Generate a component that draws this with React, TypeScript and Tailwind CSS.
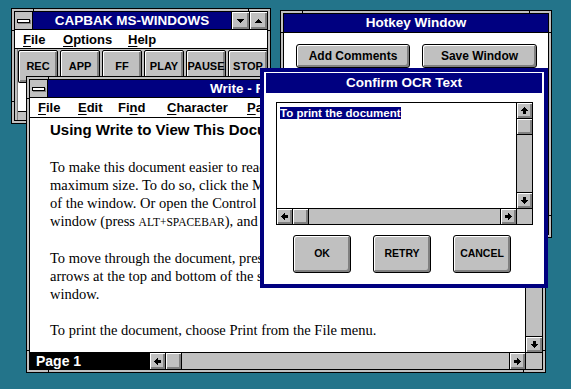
import React from 'react';

const bevel = 'shadow-[inset_1px_1px_0_#fff,inset_-2px_-2px_0_#808080]';

type Dir = 'up' | 'down' | 'left' | 'right';
const rotCls: Record<Dir, string> = { up: '', right: 'rotate-90', down: 'rotate-180', left: '-rotate-90' };

function Arrow({ dir }: { dir: Dir }) {
  return (
    <svg width="7" height="7" viewBox="0 0 7 7" shapeRendering="crispEdges" className={rotCls[dir]}>
      <rect x="3" y="0" width="1" height="1" fill="#000" />
      <rect x="2" y="1" width="3" height="1" fill="#000" />
      <rect x="1" y="2" width="5" height="1" fill="#000" />
      <rect x="0" y="3" width="7" height="1" fill="#000" />
      <rect x="2" y="4" width="3" height="3" fill="#000" />
    </svg>
  );
}

function Tri({ dir }: { dir: 'up' | 'down' }) {
  return (
    <svg width="7" height="4" viewBox="0 0 7 4" shapeRendering="crispEdges" className={dir === 'down' ? 'rotate-180' : ''}>
      <rect x="3" y="0" width="1" height="1" fill="#000" />
      <rect x="2" y="1" width="3" height="1" fill="#000" />
      <rect x="1" y="2" width="5" height="1" fill="#000" />
      <rect x="0" y="3" width="7" height="1" fill="#000" />
    </svg>
  );
}

function SBtn({ dir, className = '' }: { dir: Dir; className?: string }) {
  return (
    <div className={`flex shrink-0 items-center justify-center bg-[#c0c0c0] ${bevel} ${className}`}>
      <Arrow dir={dir} />
    </div>
  );
}

function Frame({ pos, children }: { pos: string; children: React.ReactNode }) {
  return (
    <div className={`absolute border border-black bg-[#c0c0c0] p-[2px] ${pos}`}>
      <span className="absolute left-[21px] top-0 h-[2px] w-px bg-black" />
      <span className="absolute right-[21px] top-0 h-[2px] w-px bg-black" />
      <span className="absolute bottom-0 left-[21px] h-[2px] w-px bg-black" />
      <span className="absolute bottom-0 right-[21px] h-[2px] w-px bg-black" />
      <span className="absolute left-0 top-[21px] h-px w-[2px] bg-black" />
      <span className="absolute bottom-[21px] left-0 h-px w-[2px] bg-black" />
      <span className="absolute right-0 top-[21px] h-px w-[2px] bg-black" />
      <span className="absolute bottom-[21px] right-0 h-px w-[2px] bg-black" />
      <div className="flex h-full w-full flex-col overflow-hidden border border-black">{children}</div>
    </div>
  );
}

function ControlBox() {
  return (
    <div className="flex w-[18px] shrink-0 items-center justify-center border-r border-black bg-[#c0c0c0]">
      <div className="h-[4px] w-[13px] border border-black bg-white shadow-[1px_1px_0_#808080]" />
    </div>
  );
}

function SizeBtn({ dir }: { dir: 'up' | 'down' }) {
  return (
    <div className={`flex w-[18px] shrink-0 items-center justify-center border-l border-black bg-[#c0c0c0] ${bevel}`}>
      <Tri dir={dir} />
    </div>
  );
}

function ToolBtn({ label }: { label: string }) {
  return (
    <div className={`flex h-[33px] w-[40px] shrink-0 items-center justify-center rounded-[2px] border border-black bg-[#c0c0c0] text-[11px] font-bold text-black ${bevel}`}>
      {label}
    </div>
  );
}

function PushBtn({ label, className }: { label: string; className: string }) {
  return (
    <div className={`flex shrink-0 items-center justify-center rounded-[3px] border border-black bg-[#c0c0c0] font-bold text-black ${bevel} ${className}`}>
      {label}
    </div>
  );
}

export default function App() {
  return (
    <div className="relative h-[389px] w-[571px] overflow-hidden bg-[#23748a] font-['Liberation_Sans',Arial,sans-serif] text-black">
      {/* CAPBAK window */}
      <Frame pos="left-[11px] top-[8px] w-[260px] h-[116px]">
        <div className="flex h-[18px] shrink-0 border-b border-black">
          <ControlBox />
          <div className="flex flex-1 items-center justify-center bg-[#000080] text-[13.5px] font-bold leading-none text-white">
            CAPBAK MS-WINDOWS
          </div>
          <SizeBtn dir="down" />
          <SizeBtn dir="up" />
        </div>
        <div className="flex h-[19px] shrink-0 items-center border-b border-black bg-white pl-[8px] text-[13px] font-bold leading-none">
          <span className="w-[40px]"><u className="underline-offset-2">F</u>ile</span>
          <span className="w-[65px]"><u className="underline-offset-2">O</u>ptions</span>
          <span><u className="underline-offset-2">H</u>elp</span>
        </div>
        <div className="flex flex-1">
          <div className="w-[3px] shrink-0 border-r border-[#808080] bg-[#c0c0c0]" />
          <div className="flex flex-1 flex-col bg-white">
            <div className="flex h-[34px] shrink-0 gap-[2px] bg-[#c0c0c0] pt-[1px]">
              <ToolBtn label="REC" />
              <ToolBtn label="APP" />
              <ToolBtn label="FF" />
              <ToolBtn label="PLAY" />
              <ToolBtn label="PAUSE" />
              <ToolBtn label="STOP" />
            </div>
            <div className="flex-1 bg-white" />
            <div className="h-[9px] shrink-0 border-t border-black bg-[#c0c0c0]" />
          </div>
        </div>
      </Frame>

      {/* Write window */}
      <Frame pos="left-[26px] top-[76px] w-[520px] h-[297px]">
        <div className="flex h-[18px] shrink-0 border-b border-black">
          <ControlBox />
          <div className="flex flex-1 items-center justify-center bg-[#000080] text-[13.5px] font-bold leading-none text-white">
            Write - README.WRI
          </div>
          <SizeBtn dir="down" />
          <SizeBtn dir="up" />
        </div>
        <div className="flex h-[20px] shrink-0 items-center border-b border-black bg-white pl-[8px] text-[13px] font-bold leading-none">
          <span className="w-[40px]"><u className="underline-offset-2">F</u>ile</span>
          <span className="w-[40px]"><u className="underline-offset-2">E</u>dit</span>
          <span className="w-[49px]">Fi<u className="underline-offset-2">n</u>d</span>
          <span className="w-[80px]"><u className="underline-offset-2">C</u>haracter</span>
          <span className="w-[80px]"><u className="underline-offset-2">P</u>aragraph</span>
          <span className="w-[80px]"><u className="underline-offset-2">D</u>ocument</span>
          <span><u className="underline-offset-2">H</u>elp</span>
        </div>
        <div className="flex min-h-0 flex-1">
          <div className="flex-1 overflow-hidden whitespace-nowrap bg-white pl-[20px] pt-[3px] font-['Liberation_Serif','Times_New_Roman',serif] text-[14.5px] leading-[18px]">
            <div className="mb-[19px] font-['Liberation_Sans',Arial,sans-serif] text-[15px] font-bold leading-[18px]">
              Using Write to View This Document
            </div>
            <p>To make this document easier to read, you can enlarge the Write window to its</p>
            <p>maximum size. To do so, click the Maximize button in the upper-right corner</p>
            <p>of the window. Or open the Control menu in the upper-left corner of the Write</p>
            <p>
              window (press <span className="text-[11.5px]">ALT+SPACEBAR</span>), and then choose the Maximize command.
            </p>
            <p className="mt-[18px]">To move through the document, press PAGE UP or PAGE DOWN or click the</p>
            <p>arrows at the top and bottom of the scroll bar along the right side of the Write</p>
            <p>window.</p>
            <p className="mt-[18px]">To print the document, choose Print from the File menu.</p>
          </div>
          <div className="flex w-[17px] shrink-0 flex-col border-l border-black bg-[#c0c0c0]">
            <SBtn dir="up" className="h-[16px] border-b border-black" />
            <div className={`h-[16px] shrink-0 border-b border-black bg-[#c0c0c0] ${bevel}`} />
            <div className="flex-1" />
            <SBtn dir="down" className="h-[16px] border-t border-black" />
          </div>
        </div>
        <div className="flex h-[17px] shrink-0 border-t border-black">
          <div className="flex w-[120px] shrink-0 items-center bg-black pl-[6px] text-[14px] font-bold leading-none text-white">
            Page 1
          </div>
          <div className="flex flex-1 bg-[#c0c0c0]">
            <SBtn dir="left" className="w-[16px] border-r border-black" />
            <div className={`w-[16px] shrink-0 border-r border-black bg-[#c0c0c0] ${bevel}`} />
            <div className="flex-1" />
            <SBtn dir="right" className="w-[16px] border-l border-black" />
          </div>
          <div className="w-[17px] shrink-0 border-l border-black bg-[#c0c0c0]" />
        </div>
      </Frame>

      {/* Hotkey window */}
      <Frame pos="left-[280px] top-[10px] w-[272px] h-[228px]">
        <div className="flex h-[19px] shrink-0 items-center justify-center border-b border-black bg-[#000080] text-[13.5px] font-bold leading-none text-white">
          Hotkey Window
        </div>
        <div className="flex flex-1 gap-[12px] bg-white pl-[12px] pt-[11px]">
          <PushBtn label="Add Comments" className="h-[24px] w-[114px] text-[12px]" />
          <PushBtn label="Save Window" className="h-[24px] w-[115px] text-[12px]" />
        </div>
      </Frame>

      {/* Confirm OCR Text dialog */}
      <div className="absolute left-[260px] top-[68px] flex h-[220px] w-[288px] flex-col border-[4px] border-[#000080] bg-white px-[2px] pt-[1px]">
        <div className="flex h-[20px] shrink-0 items-center justify-center bg-[#000080] text-[13.5px] font-bold leading-none text-white">
          Confirm OCR Text
        </div>
        <div className="ml-[10px] mt-[9px] flex h-[123px] w-[257px] flex-col border border-black">
          <div className="flex min-h-0 flex-1">
            <div className="flex-1 bg-white pl-[3px] pt-[4px] text-[11.5px] leading-[12px]">
              <span className="inline-block bg-[#000080] font-bold leading-[12px] text-white">To print the document</span>
            </div>
            <div className="flex w-[16px] shrink-0 flex-col border-l border-black bg-[#c0c0c0]">
              <SBtn dir="up" className="h-[16px] border-b border-black" />
              <div className={`h-[16px] shrink-0 border-b border-black bg-[#c0c0c0] ${bevel}`} />
              <div className="flex-1" />
              <SBtn dir="down" className="h-[16px] border-t border-black" />
            </div>
          </div>
          <div className="flex h-[16px] shrink-0 border-t border-black bg-[#c0c0c0]">
            <SBtn dir="left" className="w-[16px] border-r border-black" />
            <div className={`w-[16px] shrink-0 border-r border-black bg-[#c0c0c0] ${bevel}`} />
            <div className="flex-1" />
            <SBtn dir="right" className="w-[16px] border-l border-black" />
            <div className="w-[16px] shrink-0 border-l border-black bg-[#c0c0c0]" />
          </div>
        </div>
        <div className="ml-[27px] mt-[10px] flex gap-[22px]">
          <PushBtn label="OK" className="h-[38px] w-[58px] text-[10.5px]" />
          <PushBtn label="RETRY" className="h-[38px] w-[58px] text-[10.5px]" />
          <PushBtn label="CANCEL" className="h-[38px] w-[58px] text-[10.5px]" />
        </div>
      </div>
    </div>
  );
}
